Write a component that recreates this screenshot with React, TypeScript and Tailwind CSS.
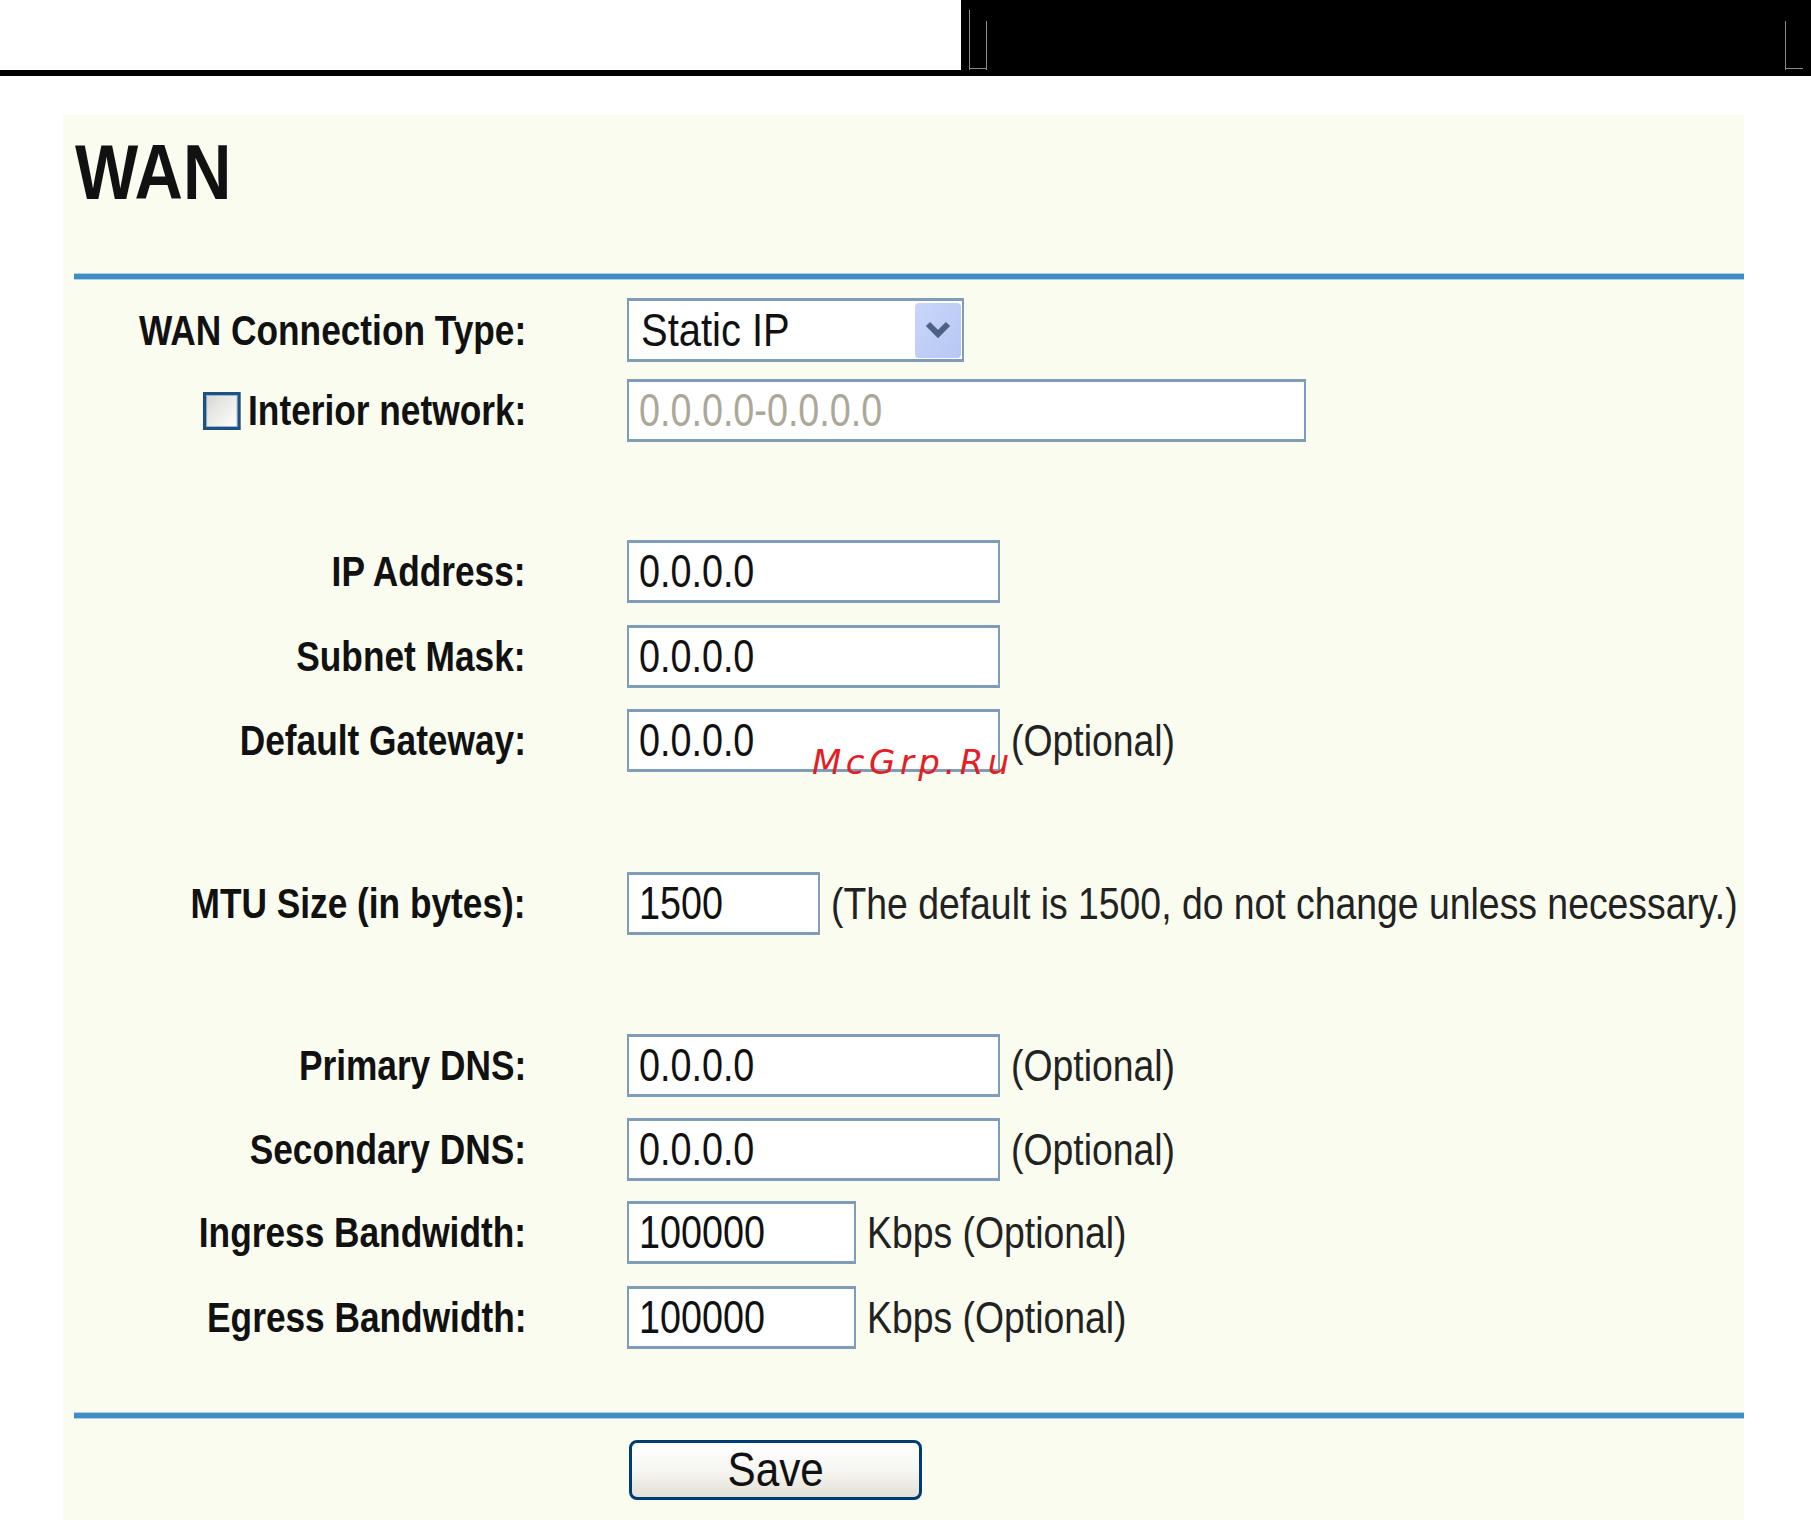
import React from "react";

type Row = {
  label: string;
  value: string;
  width: string;
  note?: string;
  gap: string;
};

const rows: Row[] = [
  { label: "IP Address:", value: "0.0.0.0", width: "w-[373px]", gap: "mt-[98px]" },
  { label: "Subnet Mask:", value: "0.0.0.0", width: "w-[373px]", gap: "mt-[22px]" },
  { label: "Default Gateway:", value: "0.0.0.0", width: "w-[373px]", note: "(Optional)", gap: "mt-[21px]" },
  {
    label: "MTU Size (in bytes):",
    value: "1500",
    width: "w-[193px]",
    note: "(The default is 1500, do not change unless necessary.)",
    gap: "mt-[100px]",
  },
  { label: "Primary DNS:", value: "0.0.0.0", width: "w-[373px]", note: "(Optional)", gap: "mt-[99px]" },
  { label: "Secondary DNS:", value: "0.0.0.0", width: "w-[373px]", note: "(Optional)", gap: "mt-[21px]" },
  { label: "Ingress Bandwidth:", value: "100000", width: "w-[229px]", note: "Kbps (Optional)", gap: "mt-[20px]" },
  { label: "Egress Bandwidth:", value: "100000", width: "w-[229px]", note: "Kbps (Optional)", gap: "mt-[22px]" },
];

// the router UI font is a narrow bitmap face, so text is squeezed horizontally
const Divider: React.FC = () => (
  <div className="ml-[11px] h-[7px] border-y border-[#b0cfe4] bg-[#3e8ec5]" />
);

const Label: React.FC<{ children: React.ReactNode }> = ({ children }) => (
  <div className="flex w-[463px] shrink-0 justify-end text-[43px] font-bold text-[#111]">
    <span className="inline-flex shrink-0 origin-right scale-x-[0.82] items-center whitespace-nowrap">{children}</span>
  </div>
);

const TextBox: React.FC<{ value: string; width: string; muted?: boolean }> = ({ value, width, muted }) => (
  <div
    className={`${width} flex h-[63px] items-center overflow-hidden border-x-2 border-y-[3px] border-[#7f9db9] bg-white px-[10px] text-[46px] ${
      muted ? "text-[#aca899]" : "text-[#111]"
    }`}
  >
    <span className="inline-block origin-left scale-x-[0.82] whitespace-nowrap">{value}</span>
  </div>
);

export default function App() {
  return (
    <div className="min-h-screen overflow-hidden bg-white font-['Liberation_Sans',sans-serif]">
      {/* top frame strip */}
      <div className="flex h-[76px] bg-black">
        <div className="h-[70px] w-[961px] bg-white" />
        <div className="relative h-[70px] flex-1">
          <span className="absolute left-[8px] top-[10px] h-[60px] w-px bg-[#8a8a8a]" />
          <span className="absolute left-[25px] top-[21px] h-[49px] w-px bg-[#8a8a8a]" />
          <span className="absolute left-[8px] top-[68px] h-px w-[18px] bg-[#8a8a8a]" />
          <span className="absolute left-[824px] top-[21px] h-[49px] w-px bg-[#8a8a8a]" />
          <span className="absolute left-[824px] top-[68px] h-px w-[18px] bg-[#8a8a8a]" />
        </div>
      </div>

      <div className="relative ml-[63px] mt-[39px] w-[1681px] bg-[#fafcf0] pb-[20px] pt-[19px]">
        <h1 className="pl-[12px] text-[77px] font-bold leading-none text-[#111]">
          <span className="inline-block origin-left scale-x-[0.87]">WAN</span>
        </h1>

        <div className="mt-[62px]">
          <Divider />
        </div>

        {/* connection type */}
        <div className="mt-[18px] flex h-[64px] items-center">
          <Label>WAN Connection Type:</Label>
          <div className="ml-[101px] flex h-[64px] w-[337px] items-center justify-between border-x-2 border-y-[3px] border-[#7f9db9] bg-white pl-[12px] pr-[1px]">
            <span className="inline-block origin-left scale-x-[0.85] whitespace-nowrap text-[47px] text-[#111]">
              Static IP
            </span>
            <span className="flex h-[55px] w-[46px] items-center justify-center rounded-[4px] bg-gradient-to-br from-[#c9d6fa] to-[#b7c7f3]">
              <svg width="26" height="18" viewBox="0 0 26 18">
                <path d="M3 3 L13 13 L23 3" fill="none" stroke="#4d6185" strokeWidth="6" />
              </svg>
            </span>
          </div>
        </div>

        {/* interior network */}
        <div className="mt-[17px] flex h-[63px] items-center">
          <Label>
            <span className="mr-[9px] h-[38px] w-[46px] border-x-[4px] border-y-[3px] border-[#1c5180] bg-gradient-to-br from-[#d8d8d2] to-white shadow-[inset_0_0_0_1px_#9ab7d6]" />
            Interior network:
          </Label>
          <div className="ml-[101px]">
            <TextBox value="0.0.0.0-0.0.0.0" width="w-[679px]" muted />
          </div>
        </div>

        {rows.map((r) => (
          <div key={r.label} className={`${r.gap} flex h-[63px] items-center`}>
            <Label>{r.label}</Label>
            <div className="ml-[101px] flex items-center">
              <TextBox value={r.value} width={r.width} />
              {r.note && (
                <span className="ml-[11px] inline-block origin-left scale-x-[0.83] whitespace-nowrap text-[45px] text-[#222]">
                  {r.note}
                </span>
              )}
            </div>
          </div>
        ))}

        <div className="mt-[63px]">
          <Divider />
        </div>

        <div className="mt-[21px] flex">
          <button className="ml-[566px] h-[60px] w-[293px] rounded-[8px] border-[3px] border-[#003c74] bg-gradient-to-b from-white via-[#f6f6f2] to-[#e3e1d5] text-[48px] leading-none text-[#111]">
            <span className="inline-block scale-x-[0.88]">Save</span>
          </button>
        </div>

        {/* watermark */}
        <span className="absolute left-[749px] top-[630px] font-['DejaVu_Sans',sans-serif] text-[34px] italic leading-none tracking-[4.5px] text-[#e31e24]">
          McGrp.Ru
        </span>
      </div>
    </div>
  );
}
